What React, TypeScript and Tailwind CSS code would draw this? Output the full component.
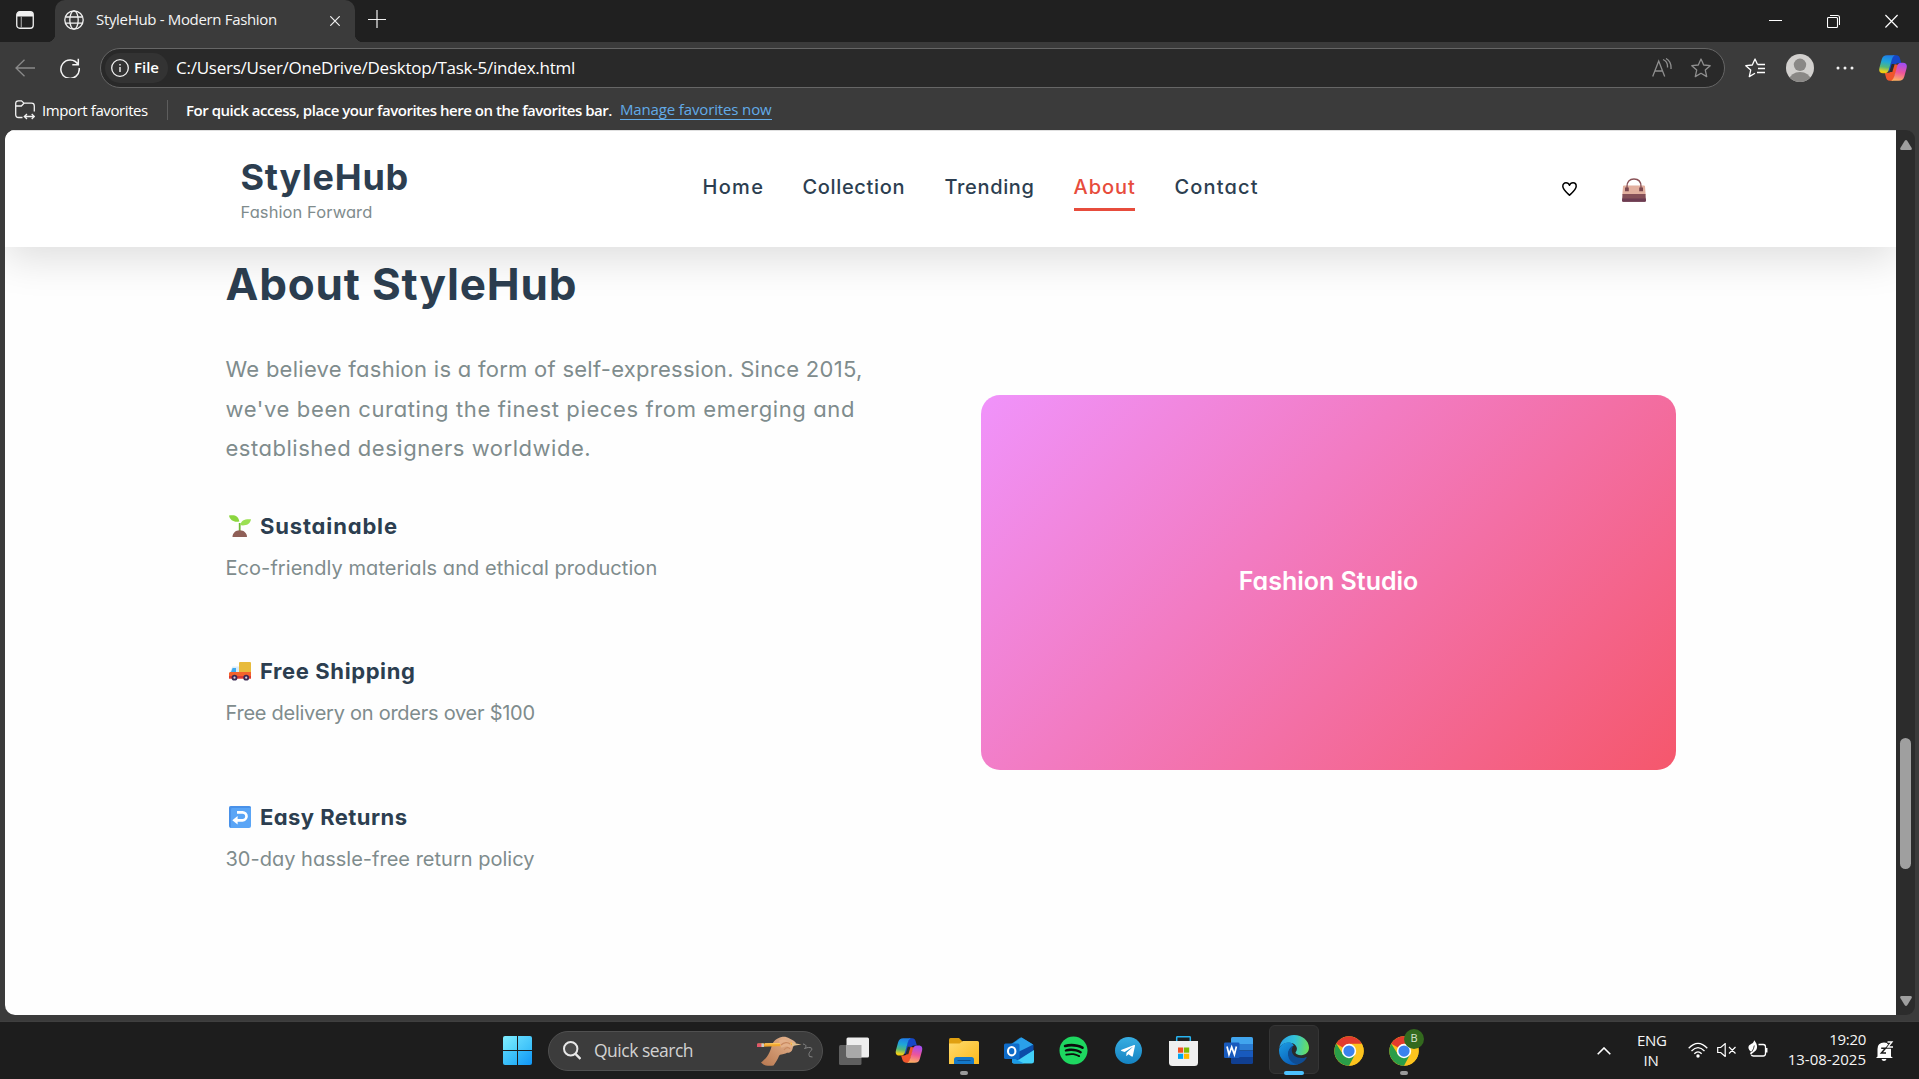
import { type ReactNode } from 'react';
import { FaSpotify, FaTelegramPlane } from 'react-icons/fa';

function Copilot({ id, className }: { id: string; className: string }) {
  return (
    <svg viewBox="0 0 28 26" className={className}>
      <defs>
        <linearGradient id={id + 'l'} x1="0.4" y1="0" x2="0.25" y2="1">
          <stop offset="0" stopColor="#1f7fe8" />
          <stop offset="0.35" stopColor="#1fa6d8" />
          <stop offset="0.65" stopColor="#55b878" />
          <stop offset="0.9" stopColor="#e8d020" />
          <stop offset="1" stopColor="#f8c400" />
        </linearGradient>
        <linearGradient id={id + 'r'} x1="0.5" y1="0" x2="0.3" y2="1">
          <stop offset="0" stopColor="#a24df2" />
          <stop offset="0.5" stopColor="#ee559a" />
          <stop offset="1" stopColor="#ffb560" />
        </linearGradient>
      </defs>
      <path d="M14 0.3h3.2c2.4 0 3.4 1.6 4 4l1 3.6h-2.600c-2.600 0-3.500 1.200-4.300 3.800l-1.600 5.300-5-1z" fill="#1547c8" />
      <path d="M14 25.700h-3.200c-2.400 0-3.400-1.600-4-4l-1-3.600h2.600c2.600 0 3.500-1.200 4.300-3.800l1.600-5.300 5 1z" fill="#f0562c" />
      <path d="M8 .3h9c-2.400 0-3.400 1.800-4.200 4.500L9.900 14.600C9 17.600 7.800 18.200 5.500 18.200H4C.6 18.200-.4 16 .5 12.400L2.700 4.500C3.600 1.400 5.200.3 8 .3z" fill={`url(#${id}l)`} />
      <path d="M20 25.700h-9c2.400 0 3.400-1.800 4.200-4.500l2.900-9.800c.9-3 2.100-3.600 4.400-3.600H24c3.400 0 4.400 2.200 3.500 5.800l-2.200 7.900c-.9 3.100-2.500 4.200-5.300 4.200z" fill={`url(#${id}r)`} />
      <path d="M12.700 9h3l-2.400 8h-3z" fill="#2b2b2b" />
    </svg>
  );
}

function Chrome() {
  return (
    <svg viewBox="0 0 48 48" className="size-[30px]">
      <circle cx="24" cy="24" r="23.500" fill="#fbc116" />
      <path d="M24 24L3.650 12.250A23.500 23.500 0 0 1 44.350 12.250H24z" fill="#e33b2e" />
      <path d="M24 13H44.800A23.500 23.500 0 0 1 24 47.500L33.500 29.500z" fill="#fcc31e" />
      <path d="M3.650 12.250A23.500 23.500 0 0 0 24 47.500L33.600 29.600 24 35 14.500 29.500z" fill="#2a9d48" />
      <circle cx="24" cy="24" r="11.500" fill="#fff" />
      <circle cx="24" cy="24" r="9" fill="#3b82ee" />
    </svg>
  );
}

function Edge() {
  return (
    <svg viewBox="0 0 30 30" className="size-[30px]">
      <defs>
        <linearGradient id="eg1" x1="0" y1="0.400" x2="1" y2="0.500">
          <stop offset="0" stopColor="#2aa0e8" />
          <stop offset="0.500" stopColor="#33c2d8" />
          <stop offset="1" stopColor="#6be05a" />
        </linearGradient>
        <linearGradient id="eg2" x1="0" y1="0" x2="0.600" y2="1">
          <stop offset="0" stopColor="#1b9de4" />
          <stop offset="1" stopColor="#0a5fb8" />
        </linearGradient>
      </defs>
      <path d="M.3 12.800C1.300 5.500 7.500 0 15 0c8.500 0 15 6 15 12.600 0 4.600-3.400 7.600-7.800 7.600-3.600 0-5.700-1.300-5.700-2.600 0-.9 1.400-1.300 1.400-4 0-3-3.100-5.900-7.600-5.900C5.500 7.700 1.700 9.800.3 12.800z" fill="url(#eg1)" />
      <path d="M10.200 7.300C4.500 7.300 0 11 0 15.500 0 23.500 6.500 30 14.500 30c2 0 3.600-.3 5-.8-6-1-10-5.200-10-10.600 0-3.700 2-6.600 5.400-8-1.200-2-2.700-3.300-4.700-3.300z" fill="url(#eg2)" />
      <path d="M14.500 10.800C11 12.200 9 15.200 9 18.800c0 6 4.800 11 11.200 10.300 3-1 5.700-3.200 7.300-6 .4-.8-.2-1.200-.8-.9-1.300.6-2.700.9-4.200.9-5.500 0-9.700-3-9.700-7.500 0-1.900.7-3.600 1.700-4.800z" fill="#0f4c92" />
    </svg>
  );
}

function Sprout() {
  return (
    <svg viewBox="0 0 22 22" className="size-[22px]">
      <path d="M9.800 22V8h1.800v14z" fill="#6fb936" />
      <path d="M0 .6C5 -.6 9.500.4 10.300 6.500 5.500 7.800 1 5.500 0 .6z" fill="#8bd63f" />
      <path d="M22 4.300c-5.600-.5-10.300.7-10.600 6C16.500 11 21.300 9.500 22 4.300z" fill="#9be052" />
      <path d="M3.500 22c0-4 3-6.800 7.200-6.800S18 18 18 22z" fill="#8f5f57" />
    </svg>
  );
}

function Truck() {
  return (
    <svg viewBox="0 0 22 22" className="size-[22px]">
      <rect x="10" y="2" width="12" height="12" rx="1" fill="#e8bb3c" />
      <path d="M3.500 6.500H10V13H.5z" fill="#d9ecfa" />
      <path d="M3.600 8H7v4.500H1.800z" fill="#3fa9ee" />
      <path d="M0 13l1-1h21v6.500H0z" fill="#f4632c" />
      <path d="M0 16h22v2.500H0z" fill="#dc3a35" />
      <circle cx="5.500" cy="17.700" r="2.900" fill="#3d2b52" />
      <circle cx="17.200" cy="17.700" r="2.900" fill="#3d2b52" />
      <circle cx="5.500" cy="17.700" r="1.100" fill="#d8cfe2" />
      <circle cx="17.200" cy="17.700" r="1.100" fill="#d8cfe2" />
    </svg>
  );
}

function ReturnArrow() {
  return (
    <svg viewBox="0 0 22 22" className="size-[22px]">
      <rect width="22" height="22" rx="2" fill="#5aa5f6" />
      <path d="M0 19V2q0-2 2-2h18q2 0 2 2H3Q2 2 2 4v18q-2-1-2-3z" fill="#4189e4" opacity="0.700" />
      <path d="M8 6.300h5.500a4 4 0 0 1 0 8H6.500" fill="none" stroke="#fff" strokeWidth="2.700" />
      <path d="M8.600 10v8.600L3.300 14.300z" fill="#fff" />
    </svg>
  );
}

function Handbag() {
  return (
    <svg viewBox="0 0 24 24" className="size-6">
      <path d="M2 7.500h20q.8 0 1 .8l.7 9H.3l.7-9q.2-.8 1-.8z" fill="#e2b09f" />
      <path d="M5 11V8.500C5 3.800 7.500 1 12 1s7 2.800 7 7.500V11" fill="none" stroke="#8a5358" strokeWidth="1.400" />
      <path d="M.5 16h23l.4 6.500q0 1.200-1.200 1.200H1.300Q.1 23.700.1 22.500z" fill="#855058" />
      <path d="M.2 20.500h23.600l.1 2q0 1.200-1.200 1.200H1.300Q.1 23.700.1 22.500z" fill="#6d3c52" />
      <path d="M3 9.500h3.800v3.700H3zM17.200 9.500H21v3.700h-3.800z" fill="#7b474f" />
    </svg>
  );
}

const features: { icon: ReactNode; title: string; text: string; titleCls: string; textCls: string }[] = [
  { icon: <Sprout />, title: 'Sustainable', text: 'Eco-friendly materials and ethical production', titleCls: 'tracking-[0.84px]', textCls: 'tracking-[0.06px]' },
  { icon: <Truck />, title: 'Free Shipping', text: 'Free delivery on orders over $100', titleCls: 'tracking-[0.6px]', textCls: 'tracking-[-0.26px]' },
  { icon: <ReturnArrow />, title: 'Easy Returns', text: '30-day hassle-free return policy', titleCls: 'tracking-[0.44px]', textCls: 'tracking-[0.01px]' },
];

const nav = [
  { label: 'Home', cls: 'w-[60px] tracking-[1.3px]' },
  { label: 'Collection', cls: 'w-[102px] tracking-[0.65px]' },
  { label: 'Trending', cls: 'w-[89px] tracking-[0.65px]' },
  { label: 'About', cls: 'w-[61px] tracking-[0.95px]' },
  { label: 'Contact', cls: 'w-[83px] tracking-[1.15px]' },
];

function TabStrip() {
  return (
    <div className="flex h-[42px] bg-[#202020]">
      <div className="flex w-[55px] items-start pt-[11px] pl-4">
        <svg viewBox="0 0 18 18" className="size-[18px]">
          <rect x="0.750" y="0.750" width="16.500" height="16.500" rx="3" fill="none" stroke="#f2f2f2" strokeWidth="1.300" />
          <path d="M1 3.500Q1 1 3.500 1h11Q17 1 17 3.500v2H1z" fill="#f2f2f2" />
          <path d="M5.300 5v12" stroke="#9a9a9a" strokeWidth="1.200" />
        </svg>
      </div>
      <div className="relative flex w-[300px] items-start rounded-t-[10px] bg-[#3b3b3b] pl-[9px]">
        <div className="absolute bottom-0 -left-2 size-2 bg-[radial-gradient(circle_at_0_0,#202020_8px,#3b3b3b_8.5px)]" />
        <div className="absolute -right-2 bottom-0 size-2 bg-[radial-gradient(circle_at_100%_0,#202020_8px,#3b3b3b_8.5px)]" />
        <svg viewBox="0 0 20 20" className="mt-2.5 size-5" fill="none" stroke="#f2f2f2" strokeWidth="1.300">
          <circle cx="10" cy="10" r="9.200" />
          <ellipse cx="10" cy="10" rx="4.200" ry="9.200" />
          <path d="M1.500 7h17M1.500 13.200h17" />
        </svg>
        <span className="mt-[7px] ml-3 w-[234px] text-[15px] leading-6 tracking-[-0.33px] text-[#f4f4f4]">StyleHub - Modern Fashion</span>
        <svg viewBox="0 0 10 10" className="mt-[15.500px] size-2.5" stroke="#f2f2f2" strokeWidth="1.200">
          <path d="M.3.3l9.400 9.400M9.700.3L.3 9.700" />
        </svg>
      </div>
      <svg viewBox="0 0 18 18" className="mt-2.5 ml-[13px] size-[18px]" stroke="#f2f2f2" strokeWidth="1.200">
        <path d="M9 0v18M0 9.500h18" />
      </svg>
      <div className="mt-[14px] mr-[21px] ml-auto flex gap-[45px]">
        <svg viewBox="0 0 13 14" className="h-3.5 w-[13px]"><path d="M0 6.500h13" stroke="#fff" /></svg>
        <svg viewBox="0 0 13 14" className="h-3.5 w-[13px]" fill="none" stroke="#fff" strokeWidth="1.100">
          <rect x="0.500" y="3.500" width="10" height="10" rx="1" />
          <path d="M3 1.500h7.500q2 0 2 2V11" />
        </svg>
        <svg viewBox="0 0 13 14" className="h-3.5 w-[13px]" stroke="#fff" strokeWidth="1.200"><path d="M.4 1l12.200 12.500M12.600 1L.4 13.500" /></svg>
      </div>
    </div>
  );
}

const starPath = 'M10 1l2.700 6 6.500.7-4.900 4.400 1.400 6.500L10 15.300l-5.700 3.300 1.400-6.500L.8 7.700l6.500-.7z';

function Toolbar() {
  return (
    <div className="flex h-[52px] items-center pl-[15px]">
      <svg viewBox="0 0 20 18" className="h-[18px] w-5" fill="none" stroke="#8a8a8a" strokeWidth="1.300">
        <path d="M20 9H1M9.500.8L1 9l8.500 8.200" />
      </svg>
      <svg viewBox="0 0 20 20" className="ml-[25px] size-5" fill="none" stroke="#f4f4f4" strokeWidth="1.500">
        <path d="M18 6.500A9.200 9.200 0 1 0 19.200 10M18.300 .8v6h-6" />
      </svg>
      <div className="ml-5 flex h-10 w-[1625px] items-center rounded-full border border-[#666] bg-[#292929] pl-1">
        <div className="flex h-[30px] w-[63px] items-center rounded-full bg-[#333] pl-1.5">
          <svg viewBox="0 0 18 18" className="size-[18px]" fill="none" stroke="#f2f2f2" strokeWidth="1.300">
            <circle cx="9" cy="9" r="8.300" />
            <path d="M9 8v5M9 5v1.500" strokeWidth="1.400" />
          </svg>
          <span className="mb-px ml-[5px] text-[15px] font-semibold text-white">File</span>
        </div>
        <span className="mb-px ml-2 text-[17px] tracking-[-0.24px] text-white">C:/Users/User/OneDrive/Desktop/Task-5/index.html</span>
        <svg viewBox="0 0 20 20" className="mr-[19px] ml-auto size-5" fill="none" stroke="#8f8f8f" strokeWidth="1.300">
          <path d="M.7 18.500L6.700 3l6 15.500M2.800 13h7.800M11 1.500q5 2 4.500 8M14 .5q5.500 3 5 10.500" />
        </svg>
        <svg viewBox="0 0 20 20" className="mr-[13px] size-5" fill="none" stroke="#8f8f8f" strokeWidth="1.300" strokeLinejoin="round"><path d={starPath} /></svg>
      </div>
      <svg viewBox="0 0 20 20" className="ml-5 size-5" fill="none" stroke="#fff" strokeWidth="1.300" strokeLinejoin="round">
        <path d="M12.500 6.500L10 1 7.300 7 .8 7.700l4.900 4.400-1.400 6.500L10 15.300M12.500 6.500H20M13 10.500h7M12 14.500h8" />
      </svg>
      <svg viewBox="0 0 28 28" className="ml-[21px] size-7">
        <clipPath id="av"><circle cx="14" cy="14" r="14" /></clipPath>
        <g clipPath="url(#av)">
          <rect width="28" height="28" fill="#d2d0ce" />
          <circle cx="14" cy="10.800" r="6.200" fill="#8a8886" />
          <ellipse cx="14" cy="25.500" rx="10.500" ry="7.500" fill="#8a8886" />
        </g>
      </svg>
      <svg viewBox="0 0 18 4" className="ml-[22px] h-1 w-[18px]" fill="#f2f2f2">
        <circle cx="2" cy="2" r="1.500" /><circle cx="9" cy="2" r="1.500" /><circle cx="16" cy="2" r="1.500" />
      </svg>
      <Copilot id="ca" className="ml-[25px] h-[26px] w-7" />
    </div>
  );
}

function FavoritesBar() {
  return (
    <div className="flex h-9 items-center pb-1 pl-[15px] text-[15px] leading-6 text-white">
      <svg viewBox="0 0 20 20" className="size-5" fill="none" stroke="#f2f2f2" strokeWidth="1.300">
        <path d="M7.500 17.500H3.500Q.7 17.500.7 14.500V3.500Q.7.8 3.500.8h3l2.500 2.400h7.500q2.800 0 2.800 2.800v5.500M.8 6h5.500L9 3.300" />
        <path d="M9.500 16.500H19M12 14l-2.700 2.500L12 19M16.700 14l2.700 2.500-2.700 2.500" />
      </svg>
      <span className="ml-[7px] w-[125px] tracking-[-0.41px]">Import favorites</span>
      <div className="h-5 w-px bg-[#5d5d5d]" />
      <span className="ml-[18px] w-[434px] font-semibold whitespace-nowrap tracking-[-0.47px]">For quick access, place your favorites here on the favorites bar.</span>
      <span className="border-b border-[#62abe8] leading-[19px] tracking-[-0.14px] text-[#62abe8]">Manage favorites now</span>
    </div>
  );
}

function SiteHeader() {
  return (
    <div className="relative z-10 flex h-[117px] items-center border-t border-[#e0e0e0] bg-white pr-[235px] pl-[235.500px] shadow-[0_12px_38px_rgba(0,0,0,0.13)]">
      <div className="w-[462px] pt-px">
        <div className="text-[36px] leading-[45px] font-bold tracking-[0.75px] text-[#2c3e50]">StyleHub</div>
        <div className="text-[16.500px] leading-6 tracking-[0.08px] text-[#7f8c8d]">Fashion Forward</div>
      </div>
      <nav className="flex gap-10 text-xl leading-[30px] font-medium">
        {nav.map((n) => (
          <div
            key={n.label}
            className={`${n.cls} border-b-[3px] pt-[5px] pb-[6px] whitespace-nowrap ${n.label === 'About' ? 'border-[#e74c3c] text-[#e74c3c]' : 'border-transparent text-[#2c3e50]'}`}
          >
            {n.label}
          </div>
        ))}
      </nav>
      <svg viewBox="0 0 15 14" className="ml-auto h-[14px] w-[15px]" fill="none" stroke="#000" strokeWidth="1.500" strokeLinejoin="round">
        <path d="M7.500 13.200C4 10 .8 7.300.8 4.200.8 2.200 2.200.8 4 .8c1.600 0 2.900.9 3.500 2.500C8.100 1.700 9.400.8 11 .8c1.800 0 3.200 1.400 3.200 3.400 0 3.100-3.200 5.800-6.700 9z" />
      </svg>
      <div className="mt-0.5 mr-[15px] ml-[45px]"><Handbag /></div>
    </div>
  );
}

function AboutSection() {
  return (
    <div className="flex pt-2.5 pl-[220.500px]">
      <div className="w-[755.500px]">
        <h1 className="text-[44px] leading-[54px] font-bold tracking-[0.83px] text-[#2c3e50]">About StyleHub</h1>
        <div className="mt-[39px] text-[22px] leading-[39.600px] whitespace-nowrap text-[#7f8c8d]">
          <div className="tracking-[0.27px]">We believe fashion is a form of self-expression. Since 2015,</div>
          <div className="tracking-[0.62px]">we've been curating the finest pieces from emerging and</div>
          <div className="tracking-[0.52px]">established designers worldwide.</div>
        </div>
        <div className="mt-[39px]">
          {features.map((f) => (
            <div key={f.title} className="h-[145.600px]">
              <div className="flex h-9 items-center gap-[9px] pl-[3.500px] text-[22px] leading-9 font-bold text-[#2c3e50]">
                {f.icon}
                <span className={f.titleCls}>{f.title}</span>
              </div>
              <div className={`mt-[7px] text-xl leading-[34px] text-[#7f8c8d] ${f.textCls}`}>{f.text}</div>
            </div>
          ))}
        </div>
      </div>
      <div className="mt-[138px] flex h-[375px] w-[695px] items-center justify-center rounded-[19px] bg-[linear-gradient(135deg,#f093fb_0%,#f5576c_100%)] pb-px text-[25px] font-semibold text-white">
        Fashion Studio
      </div>
    </div>
  );
}

function Slot({ children, mark }: { children: ReactNode; mark?: boolean }) {
  return (
    <div className="relative flex h-[58px] w-[55px] items-center justify-center">
      {children}
      {mark && <div className="absolute bottom-[5px] h-1 w-2 rounded-full bg-[#9a9a9a]" />}
    </div>
  );
}

function Taskbar() {
  return (
    <div className="flex h-[58px] items-center border-t border-[#3f3f3f] bg-[#1d1d1d]">
      <div className="ml-[503px] grid size-[29px] grid-cols-2 gap-px overflow-hidden rounded-[2px]">
        <div className="bg-gradient-to-br from-[#7fecff] to-[#4fd3fb]" />
        <div className="bg-gradient-to-br from-[#5fd8fd] to-[#36bdf9]" />
        <div className="bg-gradient-to-br from-[#4fcffb] to-[#25b0f8]" />
        <div className="bg-gradient-to-br from-[#35bbfa] to-[#1096f5]" />
      </div>
      <div className="ml-4 flex h-10 w-[275px] items-center rounded-full border border-[#505050] bg-[#3c3c3c] pl-[14px]">
        <svg viewBox="0 0 18 19" className="h-[19px] w-[18px]" fill="none" stroke="#e8e8e8" strokeWidth="2">
          <circle cx="7.700" cy="7.700" r="6.700" fill="#4a4a4a" />
          <path d="M12.500 12.800l5 5.200" strokeWidth="2.400" />
        </svg>
        <span className="ml-[13px] w-[163px] text-[17.500px] tracking-[-0.5px] text-[#d2d2d2]">Quick search</span>
        <svg viewBox="0 0 57 30" className="h-[30px] w-[57px]">
          <defs>
            <linearGradient id="hand" x1="1" y1="0" x2="0" y2="1">
              <stop offset="0" stopColor="#e8b892" />
              <stop offset="1" stopColor="#b87850" />
            </linearGradient>
          </defs>
          <path d="M4 26.500C10 22 13 17 14.500 10.500 16 5 20 2 24.500 1c3-.7 5.500 0 8 1.500 2.500 1.300 5.500 2.500 6.500 4.500L36 11c-.5 3-1.500 5-3.500 5.500-1.500.5-2.500-.5-4 1-2.500 1-5.500.5-6.500 2.500-1.500 3.500-3 6-5.500 9.500-4 .8-9 .5-12.500-3z" fill="url(#hand)" />
          <path d="M1 7.500l34-.8v3L1 11z" fill="#f0a52e" />
          <path d="M8 7.300l27-.6v1L8 8.400z" fill="#ffc95c" />
          <path d="M35 6.700l9.500 1.800L35 9.900z" fill="#e0c090" />
          <path d="M0 7.500h4.500V11H0z" fill="#e0586a" />
          <path d="M4.500 7.400H7V11H4.500z" fill="#c9c9c9" />
          <path d="M22 4.500c4-2 8-1 11 2.500l2.500 3.500c-2 1.500-4 1-5-.5-2.500 0-4 2-6.500 1.500z" fill="#e3b08a" />
          <path d="M24 9c3-3 7-3 9-1M27 14c2-3 5-3 6-1" fill="none" stroke="#c98a62" strokeWidth="1.200" />
          <path d="M46 8c3 .5 4 2 1.500 4.500 3-1.500 9-1.500 7 1.500-1.500 2-3.500 3-2 6.500l3 .5" fill="none" stroke="#858585" />
        </svg>
      </div>
      <div className="ml-[3px] flex">
        <Slot>
          <svg viewBox="0 0 30 28" className="h-7 w-[30px]">
            <rect y="8" width="22.500" height="20" rx="1.500" fill="#5f5f5f" />
            <rect x="7.500" y="0.500" width="22.500" height="20" rx="1.500" fill="#eeeeee" />
            <path d="M7.500 8h15v12.500H9q-1.500 0-1.500-1.500z" fill="#a9a9a9" />
          </svg>
        </Slot>
        <Slot><Copilot id="cb" className="h-[25px] w-7" /></Slot>
        <Slot mark>
          <svg viewBox="0 0 30 26" className="h-[26px] w-[30px]">
            <defs>
              <linearGradient id="fo" x1="0" y1="0" x2="1" y2="1">
                <stop offset="0" stopColor="#ffdb6e" />
                <stop offset="1" stopColor="#fbb91a" />
              </linearGradient>
            </defs>
            <path d="M0 1.500Q0 0 1.500 0H10l3.500 3.500V10H0z" fill="#e0a010" />
            <path d="M0 5.500h10.500L14 3h14.500Q30 3 30 4.500V26H0z" fill="url(#fo)" />
            <path d="M5 26v-4.500q0-2.500 2.500-2.500h15q2.500 0 2.500 2.500V26z" fill="#1478c8" />
            <path d="M8.500 22.500h13" stroke="#0c4f8c" />
          </svg>
        </Slot>
        <Slot>
          <svg viewBox="0 0 30 27" className="h-[27px] w-[30px]">
            <path d="M5 8.500L16 .8Q17 .2 18 .8l11 6.700V18L5 22z" fill="#1a86d8" />
            <path d="M17.500.5L29 7.500 15 17 5 9.500z" fill="#2aa0ea" />
            <path d="M29.500 7.500v6.500L13 24l-5-6z" fill="#0b4da8" />
            <path d="M30 13v11q0 2.500-2.500 2.500H10Q8 26.500 8 24.500l7-2z" fill="#42d0f8" />
            <path d="M8 20l12 6.500H10Q8 26.500 8 24.500z" fill="#1b9ae8" />
            <rect y="6.500" width="15.500" height="15.500" rx="1.500" fill="#0f6cc9" />
            <ellipse cx="7.700" cy="14.200" rx="3.700" ry="4.200" fill="none" stroke="#fff" strokeWidth="2.100" />
          </svg>
        </Slot>
        <Slot><div className="flex size-[27px] items-center justify-center rounded-full bg-[#0c0c0c]"><FaSpotify className="size-[29px] shrink-0 text-[#1ed760]" /></div></Slot>
        <Slot>
          <div className="flex size-[27px] items-center justify-center rounded-full bg-gradient-to-b from-[#37aee2] to-[#1483c2]">
            <FaTelegramPlane className="mt-px mr-0.5 size-4 text-white" />
          </div>
        </Slot>
        <Slot>
          <svg viewBox="0 0 29 30" className="h-[30px] w-[29px]">
            <path d="M7.700 5.500V1.500q0-.8.800-.8h12q.8 0 .8.800v4" fill="none" stroke="#28b4f0" strokeWidth="1.500" />
            <path d="M0 5h29v21.500q0 3.500-3.500 3.500h-22Q0 30 0 26.500z" fill="#efefef" />
            <path d="M9 11.500h5.200v5.200H9z" fill="#f25022" />
            <path d="M15 11.500h5.200v5.200H15z" fill="#7fba00" />
            <path d="M9 17.700h5.200v5.200H9z" fill="#00a4ef" />
            <path d="M15 17.700h5.200v5.200H15z" fill="#ffb900" />
          </svg>
        </Slot>
        <Slot>
          <svg viewBox="0 0 29 27" className="h-[27px] w-[29px]">
            <path d="M7 1.500Q7 0 8.500 0h19Q29 0 29 1.500V7H7z" fill="#41a5ee" />
            <path d="M7 7h22v6.500H7z" fill="#2b7cd3" />
            <path d="M7 13.500h22V20H7z" fill="#185abd" />
            <path d="M7 20h22v5.500q0 1.500-1.500 1.500h-19Q7 27 7 25.500z" fill="#103f91" />
            <rect y="5.500" width="15.500" height="15.500" rx="1.200" fill="#185abd" />
            <path d="M3 9.500l2 8 2.700-7.500 2.700 7.500 2-8" fill="none" stroke="#fff" strokeWidth="1.700" />
          </svg>
        </Slot>
        <Slot>
          <div className="mb-0.5 flex h-[49px] w-[50px] items-center justify-center rounded-md border border-[#353535] bg-[#2a2a2a]"><Edge /></div>
          <div className="absolute bottom-[5px] h-1 w-5 rounded-full bg-[#4cc2ff]" />
        </Slot>
        <Slot><Chrome /></Slot>
        <Slot mark>
          <Chrome />
          <div className="absolute top-[7px] left-[28px] flex size-5 items-center justify-center rounded-full bg-[#33691e] text-[11px] text-[#d8e4d0]">B</div>
        </Slot>
      </div>
      <div className="ml-auto flex items-center pr-0.5 text-[15px] leading-5 text-[#f5f5f5]">
        <svg viewBox="0 0 14 8" className="h-2 w-3.5" fill="none" stroke="#fff" strokeWidth="1.600"><path d="M.7 7.300L7 1l6.300 6.300" /></svg>
        <div className="mb-px ml-[26px] w-7 text-center tracking-[-0.3px]">ENG<br />IN</div>
        <svg viewBox="0 0 20 16" className="mb-0.5 ml-[23px] h-4 w-5" fill="none" stroke="#fff" strokeWidth="1.300">
          <path d="M.7 6.200Q10-3.600 19.300 6.200M3.500 9Q10 2.200 16.500 9M6.300 11.800Q10 8 13.700 11.800" />
          <circle cx="10" cy="14" r="1.700" fill="#fff" stroke="none" />
        </svg>
        <svg viewBox="0 0 20 14" className="mb-0.5 ml-[9px] h-3.5 w-5" fill="none" stroke="#fff" strokeWidth="1.200">
          <path d="M.7 4.500v5h3l4.500 4V.6l-4.500 3.900zM12 4l6.500 6.500M18.500 4L12 10.500" />
        </svg>
        <svg viewBox="0 0 20 18" className="mb-1 ml-[11px] h-[18px] w-5" fill="none" stroke="#fff" strokeWidth="1.300">
          <path d="M10.500 4.500h4.700q2.300 0 2.300 2.300v6.700q0 2.500-2.300 2.500H5.500Q3.700 16 3.300 14.800M18.800 8v4.500" />
          <path d="M6.200.2C9.500 4 10 8 7.500 10.800L3 14.500 2 14l1-2.500C0 9.500-.2 6.500 1.500 5 3 3.800 5.500 3.500 6.200.2z" fill="#fff" stroke="none" />
          <path d="M6.300 5.500Q6 9 3.500 12" stroke="#1d1d1d" strokeWidth="0.800" />
        </svg>
        <div className="mb-[3px] w-[98px] text-right"><span className="tracking-[-0.3px]">19:20</span><br />13-08-2025</div>
        <svg viewBox="0 0 18 20" className="mr-[23px] ml-2.5 h-5 w-[18px]" fill="#fff">
          <path d="M1.500 15.500V8Q1.500 1.500 8 1.500q7 0 7 6.500v7.500l2 1.500H0zM5.500 18h5q-.5 2-2.500 2t-2.500-2z" />
          <path d="M5.200 7.300h4.300L5.400 12H10" fill="none" stroke="#1d1d1d" strokeWidth="1.500" />
          <path d="M11 1.200h4.800L12 6.200h5" fill="none" stroke="#1d1d1d" strokeWidth="3.200" />
          <path d="M11.500 1h4.500L12 6h5" fill="none" stroke="#fff" strokeWidth="1.300" />
        </svg>
      </div>
    </div>
  );
}

export default function App() {
  return (
    <div className="flex h-[1079px] w-[1919px] flex-col overflow-hidden bg-[#3b3b3b] font-['Open_Sans','Noto_Sans',sans-serif]">
      <TabStrip />
      <Toolbar />
      <FavoritesBar />
      <div className="flex h-[885px] pl-[5px]">
        <div className="w-[1891px] overflow-hidden rounded-l-[10px] bg-[#fefefe] font-['Inter','Liberation_Sans',sans-serif] [font-feature-settings:'cv11']">
          <SiteHeader />
          <AboutSection />
        </div>
        <div className="flex w-[19px] flex-col items-center rounded-r-[9px] bg-[#2c2c2c]">
          <svg viewBox="0 0 12 10" className="mt-2.5 h-2.5 w-3" fill="#9f9f9f"><path d="M4.800.8q1.200-1.400 2.400 0l4.500 7.200q.5 2-1.200 2h-9Q-.2 10 .3 8z" /></svg>
          <div className="mt-[588px] h-[131px] w-[11px] rounded-full bg-[#9f9f9f]" />
          <svg viewBox="0 0 12 10" className="mt-auto mb-[9px] h-2.5 w-3 rotate-180" fill="#9f9f9f"><path d="M4.800.8q1.200-1.400 2.400 0l4.500 7.200q.5 2-1.200 2h-9Q-.2 10 .3 8z" /></svg>
        </div>
      </div>
      <div className="h-1.5" />
      <Taskbar />
    </div>
  );
}
